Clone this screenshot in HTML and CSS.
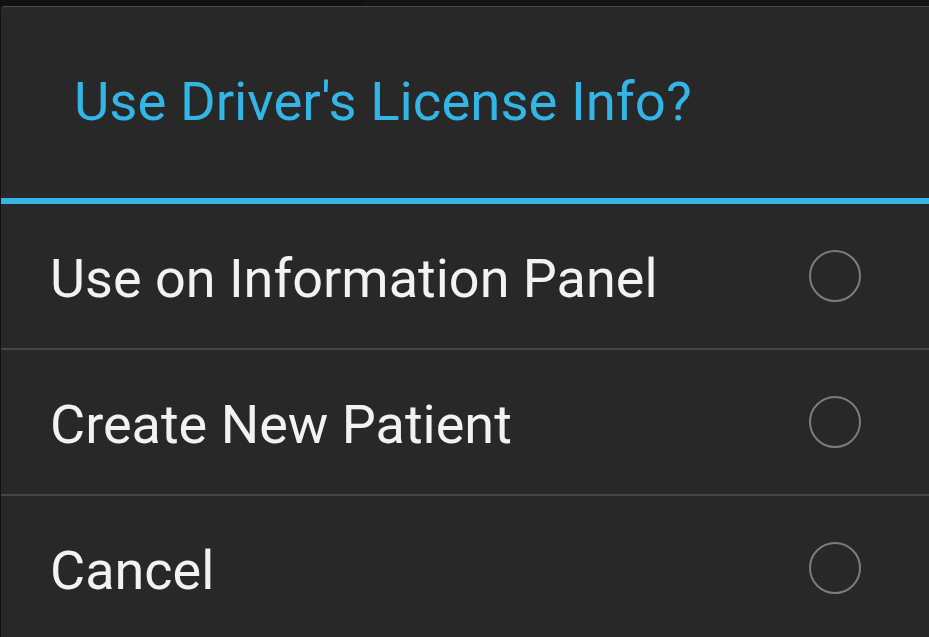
FILE: index.html
```html
<!DOCTYPE html>
<html>
<head>
<meta charset="utf-8">
<link rel="stylesheet" href="styles.css">
</head>
<body>
<div class="screen">
  <div class="dialog">
    <div class="title">Use Driver's License Info?</div>
    <div class="title-rule"></div>
    <div class="item"><span class="label">Use on Information Panel</span><span class="radio"></span></div>
    <div class="divider"></div>
    <div class="item"><span class="label">Create New Patient</span><span class="radio"></span></div>
    <div class="divider"></div>
    <div class="item"><span class="label">Cancel</span><span class="radio"></span></div>
  </div>
</div>
</body>
</html>
```
FILE: styles.css
```css
html, body {
  margin: 0;
  padding: 0;
  background: #0f1115;
  overflow: hidden;
}
.screen {
  width: 929px;
  height: 637px;
  padding-top: 6px;
  padding-left: 1px;
  box-sizing: border-box;
  background: linear-gradient(to right, #0f1115 363px, #141414 363px);
  overflow: hidden;
}
.dialog {
  width: 940px;
  background: #282828;
  border-top: 1px solid #4a4a4a;
  border-top-left-radius: 4px;
  font-family: Roboto, "Noto Sans", sans-serif;
}
.title {
  height: 191px;
  display: flex;
  align-items: center;
  padding-left: 73px;
  padding-bottom: 3px;
  box-sizing: border-box;
  color: #33b5e5;
  font-size: 54.5px;
}
.title-rule {
  height: 6px;
  background: #33b5e5;
}
.item {
  height: 144px;
  display: flex;
  align-items: center;
  padding-left: 49px;
  padding-top: 4px;
  box-sizing: border-box;
  color: #f2f2f2;
  font-size: 54px;
}
.label {
  flex: 1;
}
.radio {
  width: 48px;
  height: 48px;
  border: 2px solid #7c7c7c;
  border-radius: 50%;
  margin-right: 80px;
  margin-top: -4px;
}
.divider {
  height: 2px;
  background: #464646;
}
```
